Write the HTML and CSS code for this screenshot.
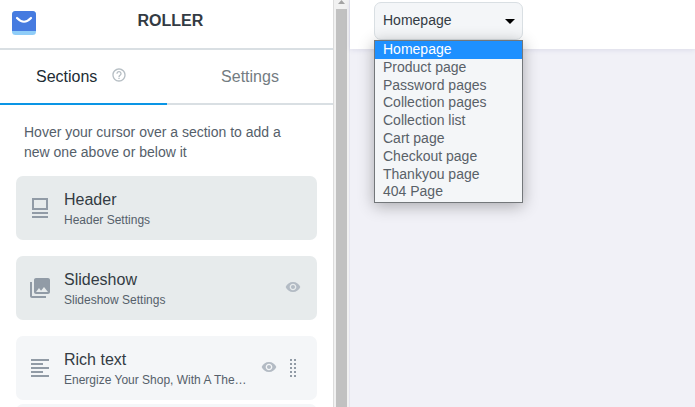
FILE: index.html
```html
<!DOCTYPE html>
<html lang="en">
<head>
<meta charset="utf-8">
<title>ROLLER</title>
<link rel="stylesheet" href="styles.css">
</head>
<body>
<div class="app">
  <aside class="sidebar">
    <header class="brand">
      <svg class="logo" width="24" height="24" viewBox="0 0 24 24"><rect width="24" height="24" rx="3.500" fill="#8fcdf8"/><path d="M0 20V3.500Q0 0 3.500 0H20.500Q24 0 24 3.500V20Z" fill="#467be0"/><path d="M5 7Q12 14.500 19 7" fill="none" stroke="#fff" stroke-width="2.200" stroke-linecap="round"/></svg>
      <h1 class="title">ROLLER</h1>
    </header>
    <nav class="tabs">
      <div class="tab active"><span>Sections</span><svg class="help" width="16" height="16" viewBox="0 0 24 24" fill="#b6bec4"><path d="M11 18h2v-2h-2v2zm1-16C6.480 2 2 6.480 2 12s4.480 10 10 10 10-4.480 10-10S17.520 2 12 2zm0 18c-4.410 0-8-3.590-8-8s3.590-8 8-8 8 3.590 8 8-3.590 8-8 8zm0-14c-2.210 0-4 1.790-4 4h2c0-1.100.9-2 2-2s2 .9 2 2c0 2-3 1.750-3 5h2c0-2.250 3-2.500 3-5 0-2.210-1.790-4-4-4z"/></svg></div>
      <div class="tab">Settings</div>
    </nav>
    <p class="hint">Hover your cursor over a section to add a new one above or below it</p>
    <div class="card fixed">
      <svg class="icon" width="24" height="24" viewBox="0 0 24 24" fill="none" stroke="#919ba6"><rect x="5" y="3" width="14" height="10" stroke-width="2"/><path d="M4 17H20M4 21H20" stroke-width="2"/></svg>
      <div class="info"><div class="name">Header</div><div class="sub">Header Settings</div></div>
    </div>
    <div class="card fixed">
      <svg class="icon" width="24" height="24" viewBox="0 0 24 24" fill="#919ba6"><path d="M22 16V4c0-1.100-.9-2-2-2H8c-1.100 0-2 .9-2 2v12c0 1.100.9 2 2 2h12c1.100 0 2-.9 2-2zm-11-4l2.030 2.710L16 11l4 5H8l3-4zM2 6v14c0 1.100.9 2 2 2h14v-2H4V6H2z"/></svg>
      <div class="info"><div class="name">Slideshow</div><div class="sub">Slideshow Settings</div></div>
      <svg class="eye" width="16" height="16" viewBox="0 0 24 24"><path d="M12 4.500C7 4.500 2.730 7.610 1 12c1.730 4.390 6 7.500 11 7.500s9.270-3.110 11-7.500c-1.730-4.390-6-7.500-11-7.500zM12 17c-2.760 0-5-2.240-5-5s2.240-5 5-5 5 2.240 5 5-2.240 5-5 5zm0-8c-1.660 0-3 1.340-3 3s1.340 3 3 3 3-1.340 3-3-1.340-3-3-3z"/></svg>
    </div>
    <div class="card">
      <svg class="icon" width="24" height="24" viewBox="0 0 24 24" stroke="#919ba6" stroke-width="2"><path d="M3 4H21M3 8H15M3 12H21M3 16H15M3 20H21"/></svg>
      <div class="info"><div class="name">Rich text</div><div class="sub">Energize Your Shop, With A The…</div></div>
      <svg class="eye" width="16" height="16" viewBox="0 0 24 24"><path d="M12 4.500C7 4.500 2.730 7.610 1 12c1.730 4.390 6 7.500 11 7.500s9.270-3.110 11-7.500c-1.730-4.390-6-7.500-11-7.500zM12 17c-2.760 0-5-2.240-5-5s2.240-5 5-5 5 2.240 5 5-2.240 5-5 5zm0-8c-1.660 0-3 1.340-3 3s1.340 3 3 3 3-1.340 3-3-1.340-3-3-3z"/></svg>
      <svg class="drag" width="6" height="18" viewBox="0 0 6 18" stroke="#919ba6" stroke-width="2" stroke-dasharray="2 2"><path d="M1 0V18M5 0V18"/></svg>
    </div>
    <div class="card next"></div>
  </aside>
  <div class="scrollbar">
    <svg class="up" width="7" height="4" viewBox="0 0 7 4"><path d="M0 4L3.500 0L7 4Z" fill="#a3a3a3"/></svg>
    <div class="thumb"></div>
  </div>
  <main class="preview">
    <div class="topbar">
      <div class="select">
        <span>Homepage</span><svg class="caret" width="10" height="5" viewBox="0 0 10 5"><path d="M0 0H10L5 5Z"/></svg>
        <ul class="options">
          <li class="selected">Homepage</li>
          <li>Product page</li>
          <li>Password pages</li>
          <li>Collection pages</li>
          <li>Collection list</li>
          <li>Cart page</li>
          <li>Checkout page</li>
          <li>Thankyou page</li>
          <li>404 Page</li>
        </ul>
      </div>
    </div>
  </main>
</div>
</body>
</html>
```
FILE: styles.css
```css
* { box-sizing: border-box; }
body {
  margin: 0;
  overflow: hidden;
  font-family: "Liberation Sans", Arial, sans-serif;
  font-size: 14px;
  color: #333b43;
}
.app { display: flex; height: 407px; overflow: hidden; }
.sidebar { width: 333px; flex: none; background: #fff; }
.brand {
  display: flex;
  height: 50px;
  padding: 11px 12px 0;
  border-bottom: 2px solid #d9dfe3;
}
.logo { flex: none; }
.title { margin: 0 0 0 101.500px; font-size: 16px; line-height: 19px; }
.tabs { display: grid; grid-template-columns: 167px 166px; height: 55px; }
.tab {
  display: flex;
  align-items: center;
  justify-content: center;
  border-bottom: 2px solid #d9dfe3;
  font-size: 16px;
  color: #737c82;
}
.tab.active {
  justify-content: flex-start;
  padding-left: 36px;
  border-color: #0a95e5;
  color: #212b33;
}
.help { margin: -3px 0 0 13.500px; }
.hint { margin: 17px 24px 14px; line-height: 20px; color: #55606a; }
.card {
  display: flex;
  align-items: center;
  width: 301px;
  height: 64px;
  margin: 0 16px 16px;
  padding: 0 16px 0 12px;
  border-radius: 7px;
  background: #f4f6f8;
}
.card.fixed { background: #e7ebec; }
.card.next { margin-top: -12px; }
.icon { flex: none; }
.info { flex: 1; min-width: 0; margin-left: 12px; padding-top: 4px; }
.name { font-size: 16px; line-height: 20px; }
.sub {
  font-size: 12px;
  line-height: 20px;
  color: #55606a;
  white-space: nowrap;
}
.eye { flex: none; margin-bottom: 2px; fill: #b3bbc4; }
.drag { flex: none; margin: 0 5px 0 13px; }
.scrollbar {
  display: flex;
  flex-direction: column;
  align-items: center;
  width: 17px;
  flex: none;
  border-left: 1px solid #dcdcdc;
  border-right: 1px solid #e4e4ee;
  background: #f1f1f1;
}
.up { flex: none; margin-bottom: 5px; }
.thumb { flex: 1; width: 11px; background: #c1c1c1; }
.preview { flex: 1; background: #f1f1f7; }
.topbar {
  height: 49px;
  padding: 2px 24px;
  background: #fff;
  box-shadow: 0 1px 5px rgba(80, 80, 150, .13);
}
.select {
  position: relative;
  display: flex;
  align-items: center;
  justify-content: space-between;
  width: 149px;
  height: 38px;
  padding: 0 7px 2px 8px;
  border: 1px solid #d9dfe3;
  border-radius: 7px;
  background: #f4f6f8;
}
.caret { margin-top: 3px; }
.options {
  position: absolute;
  top: 37px;
  left: -1px;
  width: 149px;
  height: 163px;
  margin: 0;
  padding: 0;
  border: 1px solid #73777a;
  background: #f4f6f8;
  box-shadow: 0 3px 15px rgba(0, 0, 0, .3);
  color: #596168;
  list-style: none;
}
.options li { height: 17.800px; padding-left: 8px; line-height: 16px; }
.options .selected { background: #1e90ff; color: #fff; }
```
